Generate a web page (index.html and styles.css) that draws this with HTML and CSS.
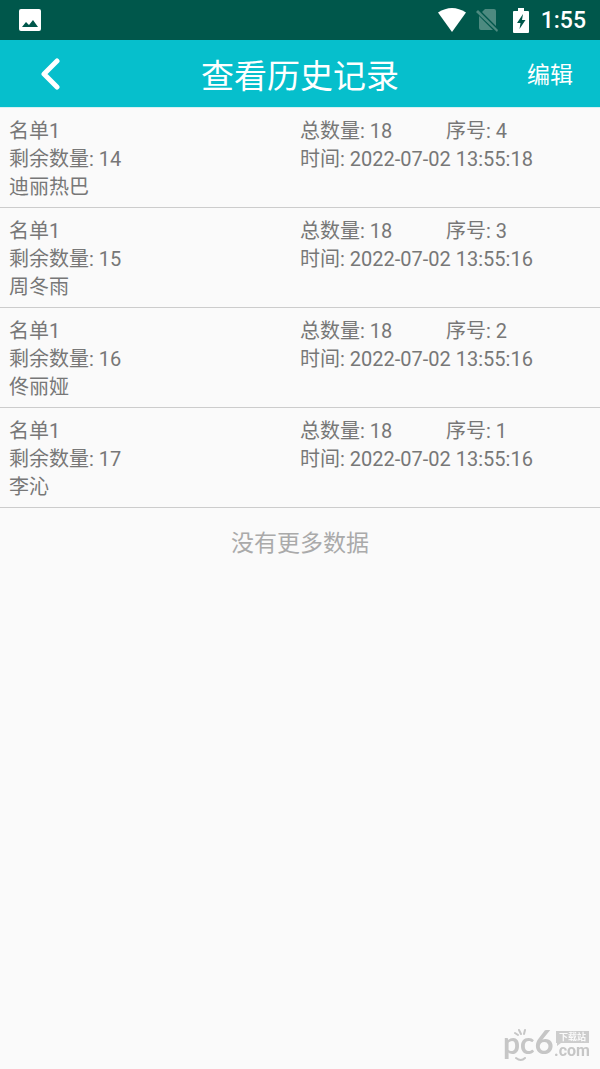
FILE: index.html
```html
<!DOCTYPE html>
<html lang="zh-CN">
<head>
    <meta charset="UTF-8">
    <meta name="viewport" content="width=device-width, initial-scale=1.0">
    <title>查看历史记录</title>
    <link rel="stylesheet" href="styles.css">
</head>
<body>
    <div class="status-bar">
        <svg class="icon-image" width="22" height="22" viewBox="0 0 22 22">
            <path fill="#fff" fill-rule="evenodd" d="M2 0h18a2 2 0 0 1 2 2v18a2 2 0 0 1-2 2H2a2 2 0 0 1-2-2V2a2 2 0 0 1 2-2zM3 18h16l-5-7-4 5-3-3z"/>
        </svg>
        <div class="status-icons">
            <svg class="icon-wifi" width="30" height="24" viewBox="0 0 30 24">
                <path fill="#fff" d="M1 4.500Q15-4.500 29 4.500L15 24z"/>
            </svg>
            <svg class="icon-sim" width="22" height="24" viewBox="0 0 22 24">
                <path fill="#4d8a80" d="M9 1h9a2 2 0 0 1 2 2v15L6 4zM3 8l14 14H5a2 2 0 0 1-2-2z"/>
                <path fill="#4d8a80" d="M2 2l20 20-1 2L0 4z"/>
            </svg>
            <svg class="icon-battery" width="16" height="25" viewBox="0 0 16 25">
                <path fill="#fff" fill-rule="evenodd" d="M5 0h6v3h4a1 1 0 0 1 1 1v20a1 1 0 0 1-1 1H1a1 1 0 0 1-1-1V4a1 1 0 0 1 1-1h4zM10 6l-6 9h3.500l-1 6 6-9H9z"/>
            </svg>
            <span class="clock">1:55</span>
        </div>
    </div>

    <header class="header">
        <button class="back" aria-label="返回">
            <svg width="20" height="34" viewBox="0 0 20 34">
                <path fill="none" stroke="#fff" stroke-width="5" stroke-linecap="round" stroke-linejoin="round" d="M17 4L4 17l13 13"/>
            </svg>
        </button>
        <h1 class="title">查看历史记录</h1>
        <button class="edit">编辑</button>
    </header>

    <ul class="list">
        <li class="item">
            <div class="left">
                <div>名单1</div>
                <div>剩余数量: 14</div>
                <div>迪丽热巴</div>
            </div>
            <div class="right">
                <div class="counts"><span>总数量: 18</span><span>序号: 4</span></div>
                <div>时间: 2022-07-02 13:55:18</div>
            </div>
        </li>
        <li class="item">
            <div class="left">
                <div>名单1</div>
                <div>剩余数量: 15</div>
                <div>周冬雨</div>
            </div>
            <div class="right">
                <div class="counts"><span>总数量: 18</span><span>序号: 3</span></div>
                <div>时间: 2022-07-02 13:55:16</div>
            </div>
        </li>
        <li class="item">
            <div class="left">
                <div>名单1</div>
                <div>剩余数量: 16</div>
                <div>佟丽娅</div>
            </div>
            <div class="right">
                <div class="counts"><span>总数量: 18</span><span>序号: 2</span></div>
                <div>时间: 2022-07-02 13:55:16</div>
            </div>
        </li>
        <li class="item">
            <div class="left">
                <div>名单1</div>
                <div>剩余数量: 17</div>
                <div>李沁</div>
            </div>
            <div class="right">
                <div class="counts"><span>总数量: 18</span><span>序号: 1</span></div>
                <div>时间: 2022-07-02 13:55:16</div>
            </div>
        </li>
    </ul>
    <p class="no-more">没有更多数据</p>

    <!-- 右下角水印 -->
    <svg class="watermark" width="90" height="40" viewBox="0 0 90 40">
        <text class="mark-pc" x="1" y="32">pc<tspan class="mark-6">6</tspan></text>
        <g fill="none" stroke="#c6c6c6" stroke-width="2" stroke-linecap="round">
            <path d="M13 11l3 2M17 8l2 4M23 8l-1 4M14 36q5 4 9 0"/>
        </g>
        <path fill="#cdcdcd" d="M54 9h33v12H59l-4 3v-3h-1z"/>
        <text class="mark-cn" x="57" y="18">下载站</text>
        <text class="mark-com" x="52" y="34">.com</text>
    </svg>
</body>
</html>
```
FILE: styles.css
```css
* {
    box-sizing: border-box;
}

body {
    margin: 0;
    min-height: 100vh;
    background-color: #fafafa;
    color: #777;
    font-family: Roboto, "Noto Sans CJK SC", sans-serif;
    font-size: 20px;
    line-height: 28px;
}

.status-bar {
    display: flex;
    align-items: center;
    justify-content: space-between;
    height: 40px;
    padding: 0 14px 0 19px;
    background-color: #00574b;
}

.status-icons {
    display: flex;
    align-items: center;
}

.icon-sim {
    margin-left: 9px;
}

.icon-battery {
    margin-left: 15px;
}

.clock {
    margin-left: 12px;
    padding-top: 2px;
    color: #fff;
    font-size: 23px;
    font-weight: 500;
}

.header {
    display: grid;
    grid-template-columns: 100px 1fr 100px;
    align-items: center;
    height: 68px;
    border-bottom: 1px solid #d5f1f3;
    background-color: #06bfcc;
    color: #fff;
}

.header button {
    padding: 0;
    border: none;
    background: none;
    color: #fff;
    font-family: inherit;
    font-size: 23px;
    line-height: 32px;
    cursor: pointer;
}

.back svg {
    display: block;
    margin: 0 auto;
}

.title {
    margin: 0;
    padding-top: 6px;
    font-size: 33px;
    font-weight: normal;
    line-height: 48px;
    text-align: center;
}

.header .edit {
    padding-top: 4px;
}

.list {
    margin: 0;
    padding: 0;
    list-style: none;
}

.item {
    display: grid;
    grid-template-columns: 1fr 1fr;
    padding: 9px 0 6px;
    border-bottom: 1px solid #ccc;
}

.left {
    padding-left: 9px;
}

.right {
    padding-right: 8px;
}

.counts {
    display: grid;
    grid-template-columns: 1fr 1fr;
}

.no-more {
    margin: 22px 0;
    color: #aaa;
    font-size: 23px;
    text-align: center;
}

.watermark {
    position: fixed;
    right: 8px;
    bottom: 7px;
}

.mark-pc {
    fill: #c6c6c6;
    font-family: Lato, sans-serif;
    font-size: 30px;
    font-weight: bold;
}

.mark-6 {
    font-size: 33px;
}

.mark-cn {
    fill: #fafafa;
    font-family: "Noto Sans CJK SC", sans-serif;
    font-size: 9px;
    font-weight: bold;
}

.mark-com {
    fill: #c6c6c6;
    font-family: Roboto, sans-serif;
    font-size: 16px;
    font-weight: bold;
}
```
